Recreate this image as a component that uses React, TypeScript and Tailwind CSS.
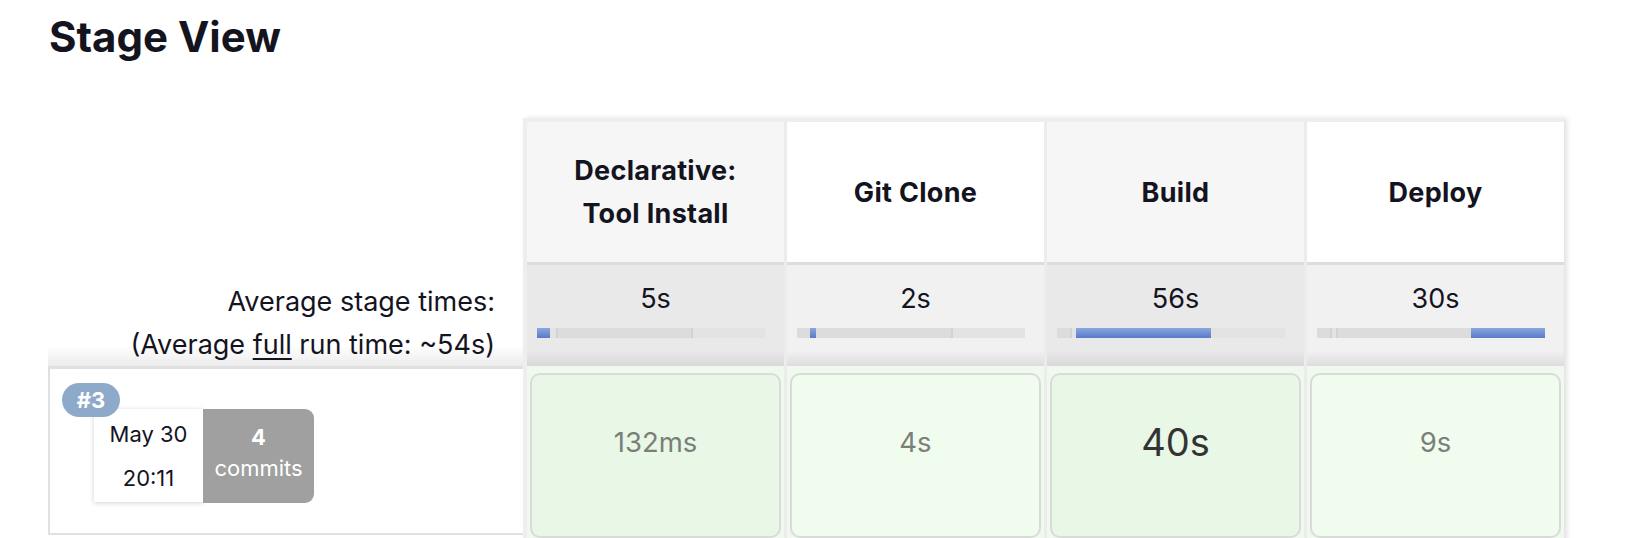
const stages = [
  { name: ["Declarative:", "Tool Install"], avg: "5s", hi: 0, time: "132ms", big: false },
  { name: ["Git Clone"], avg: "2s", hi: 1, time: "4s", big: false },
  { name: ["Build"], avg: "56s", hi: 2, time: "40s", big: true },
  { name: ["Deploy"], avg: "30s", hi: 3, time: "9s", big: false },
];

// widths of each stage inside the full-run bar
const segs = ["w-[13px]", "w-[6px]", "w-[135px]", "w-[74px]"];

function RunBar({ hi }: { hi: number }) {
  return (
    <div className="flex h-[10px] w-[228px] overflow-hidden bg-[#dcdcdc] shadow-[inset_0_1px_2px_rgba(0,0,0,0.08)]">
      {segs.map((w, i) => (
        <div
          key={i}
          className={
            w +
            " h-full " +
            (i === hi
              ? "bg-gradient-to-b from-[#8ba7dd] to-[#587bcb]"
              : i % 2 === 0
              ? "bg-[#dcdcdc]"
              : "bg-[#e3e3e3]") +
            (i > 0 && i !== hi && i - 1 !== hi ? " border-l-2 border-[#d2d2d2]" : "")
          }
        />
      ))}
    </div>
  );
}

export default function App() {
  return (
    <div className="min-h-screen bg-white font-['Inter',sans-serif] text-[#14141f]">
      <h1 className="pl-[49px] pt-[16px] text-[42px] font-bold leading-none">Stage View</h1>

      <div className="ml-[48px] mt-[60px] flex">
        {/* left column: summary + run history */}
        <div className="flex w-[475px] flex-col">
          <div className="h-[144px]" />
          <div className="h-[104px] bg-gradient-to-b from-white from-80% to-[#ececec] pr-[28px] pt-[18px] text-right text-[27px] leading-[43px]">
            <div>Average stage times:</div>
            <div>
              (Average <span className="underline underline-offset-4">full</span> run time: ~54s)
            </div>
          </div>
          <div className="relative h-[169px] border-b-2 border-l-2 border-t-[3px] border-[#e0e0e0] bg-white">
            <span className="absolute left-[12px] top-[14px] z-10 flex h-[34px] w-[58px] items-center justify-center rounded-full bg-[#8eaacb] text-[22px] font-bold text-white">
              #3
            </span>
            <div className="ml-[44px] mt-[40px] flex">
              <div className="flex h-[93px] w-[109px] flex-col items-center justify-center bg-white text-[22px] leading-[44px] shadow-[0_1px_5px_rgba(0,0,0,0.18)]">
                <div>May 30</div>
                <div>20:11</div>
              </div>
              <div className="flex h-[94px] w-[111px] flex-col items-center justify-center rounded-r-[9px] bg-[#a0a0a0] pb-[6px] text-[22px] leading-[31px] text-white">
                <div className="font-bold">4</div>
                <div>commits</div>
              </div>
            </div>
          </div>
        </div>

        {/* stage table */}
        <div className="h-fit border-l-4 border-t-4 border-[#ededf2] shadow-[3px_0_5px_rgba(0,0,0,0.12)]">
          <div className="grid grid-cols-[repeat(4,257px)] gap-x-[3px] bg-[#ececec]">
            {stages.map((s, i) => (
              <div
                key={"h" + i}
                className={
                  "flex h-[140px] flex-col items-center justify-center text-center text-[27px] font-bold leading-[43px] tracking-[0.3px] " +
                  (i % 2 === 0 ? "bg-[#f6f6f6]" : "bg-white")
                }
              >
                {s.name.map((l) => (
                  <div key={l}>{l}</div>
                ))}
              </div>
            ))}
            {stages.map((s, i) => (
              <div
                key={"a" + i}
                className={
                  "flex h-[104px] flex-col border-t-[3px] border-[#dcdcdc] pt-[18px] " +
                  (i % 2 === 0
                    ? "bg-gradient-to-b from-[#e9e9e9] from-85% to-[#d8d8d8]"
                    : "bg-gradient-to-b from-[#f1f1f1] from-85% to-[#dddddd]")
                }
              >
                <div className="text-center text-[27px] leading-[32px]">{s.avg}</div>
                <div className="ml-[10px] mt-[13px]">
                  <RunBar hi={s.hi} />
                </div>
              </div>
            ))}
            {stages.map((s, i) => (
              <div key={"c" + i} className="h-[176px] bg-[#eff9ed] px-[3px] pt-[7px]">
                <div
                  className={
                    "h-[165px] rounded-[10px] border-2 border-[#dadada] pt-[47px] text-center leading-[40px] " +
                    (i % 2 === 0 ? "bg-[#e8f7e6]" : "bg-[#f0fdee]") +
                    (s.big ? " text-[38px] text-[#333333]" : " text-[27.5px] text-[#7a7f7a]")
                  }
                >
                  {s.time}
                </div>
              </div>
            ))}
          </div>
        </div>
      </div>
    </div>
  );
}
